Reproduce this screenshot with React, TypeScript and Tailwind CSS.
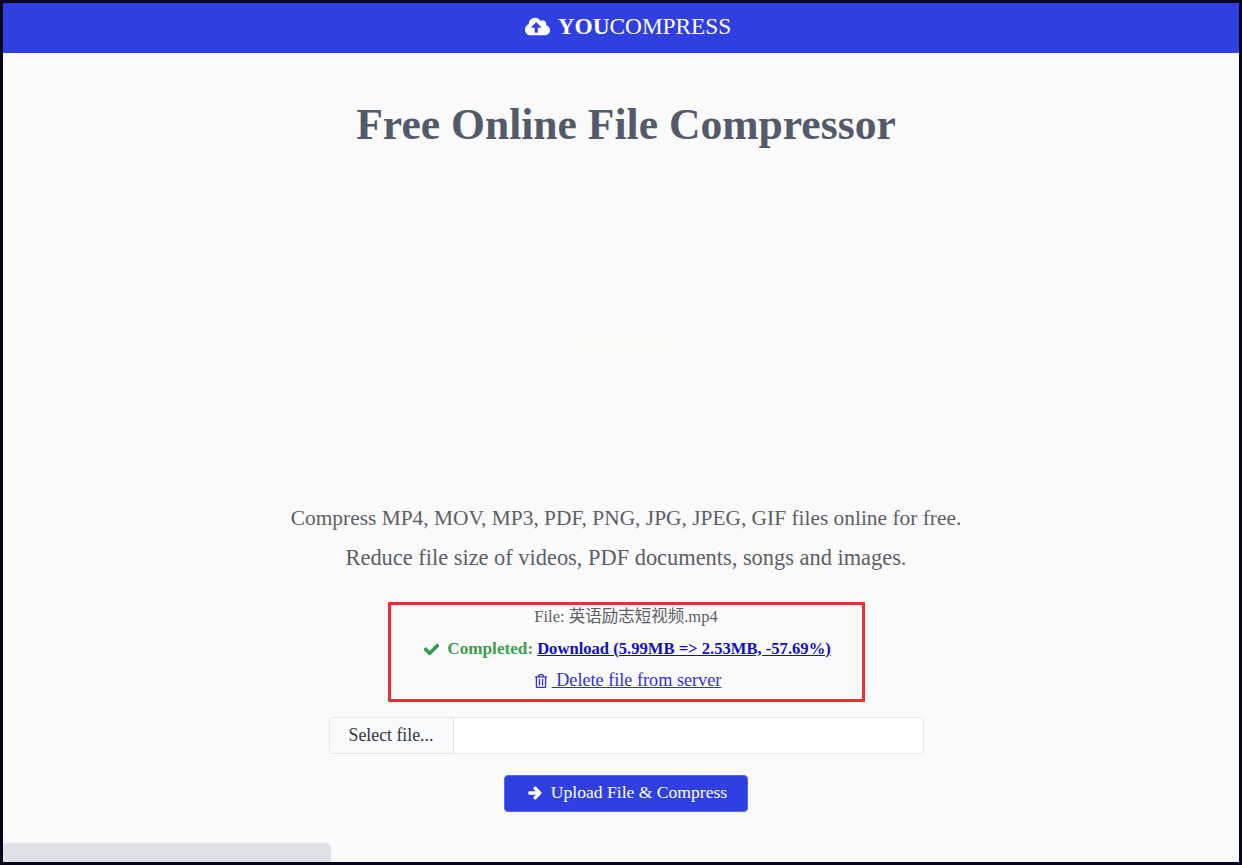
import React from 'react';
import { FaCloudUploadAlt, FaCheck, FaRegTrashAlt, FaArrowRight } from 'react-icons/fa';

const serif = 'font-["Liberation_Serif","Noto_Sans_CJK_SC",serif]';

export default function App(): React.ReactElement {
  return (
    <div className={`relative h-[865px] overflow-hidden border-[3px] border-[#05051e] bg-[#fafafa] ${serif}`}>
      <header className="flex h-[50px] items-center justify-center bg-[#3040e0] pb-[3px] pl-[14px] text-white">
        <FaCloudUploadAlt size={25} />
        <span className="ml-[8px] text-[23.3px] leading-none">
          <b>YOU</b>COMPRESS
        </span>
      </header>

      <main className="flex flex-col items-center pl-[10px]">
        <h1 className="mt-[45px] text-[43.6px] leading-[52px] font-bold text-[#535a6b]">Free Online File Compressor</h1>

        {/* ad slot, nearly blank in the shot */}
        <div className="mt-[185px] h-[28px] w-[88px] bg-[#fafaf6]" />

        <p className="mt-[135px] text-[21.4px] leading-[40px] text-[#5c5f66]">
          Compress MP4, MOV, MP3, PDF, PNG, JPG, JPEG, GIF files online for free.
        </p>
        <p className="text-[22.4px] leading-[40px] text-[#5c5f66]">
          Reduce file size of videos, PDF documents, songs and images.
        </p>

        <div className="mt-[24px] flex h-[100px] w-[477px] flex-col items-center border-[3px] border-[#ee2c33]">
          <div className="h-[28px] text-[16.5px] leading-[24px] text-[#5c5f66]">File: 英语励志短视频.mp4</div>
          <div className="flex h-[32px] items-center pl-[3px]">
            <FaCheck size={15} stroke="currentColor" strokeWidth={30} className="text-[#2f9e4c]" />
            <b className="ml-[8px] text-[17.2px] text-[#3c9e50]">Completed:</b>
            <a href="#" className="ml-[4px] text-[16.6px] font-bold text-[#1010c0] underline">
              Download (5.99MB =&gt; 2.53MB, -57.69%)
            </a>
          </div>
          <a href="#" className="flex h-[32px] items-center pl-[3px] text-[18.2px] text-[#3030d8]">
            <FaRegTrashAlt size={14} />
            <span className="ml-[4px] whitespace-pre underline"> Delete file from server</span>
          </a>
        </div>

        <div className="mt-[15px] flex h-[37px] w-[595px] overflow-hidden rounded-[4px] border border-[#e6e7ea] bg-white">
          <div className="flex w-[124px] items-center justify-center border-r border-[#e6e7ea] bg-[#f8f9fa] pb-[1px] text-[17.8px] text-[#33373d]">
            Select file...
          </div>
        </div>

        <button className="mt-[21px] flex h-[37px] w-[244px] items-center justify-center rounded-[4px] border border-[#4a6cf0] bg-[#3040e0] pb-[2px] pl-[3px] text-[17.6px] text-white">
          <FaArrowRight size={14} stroke="currentColor" strokeWidth={40} />
          <span className="ml-[9px]">Upload File &amp; Compress</span>
        </button>
      </main>

      <div className="absolute bottom-0 left-0 h-[19px] w-[328px] rounded-tr-[6px] bg-[#dee2e6]" />
    </div>
  );
}
